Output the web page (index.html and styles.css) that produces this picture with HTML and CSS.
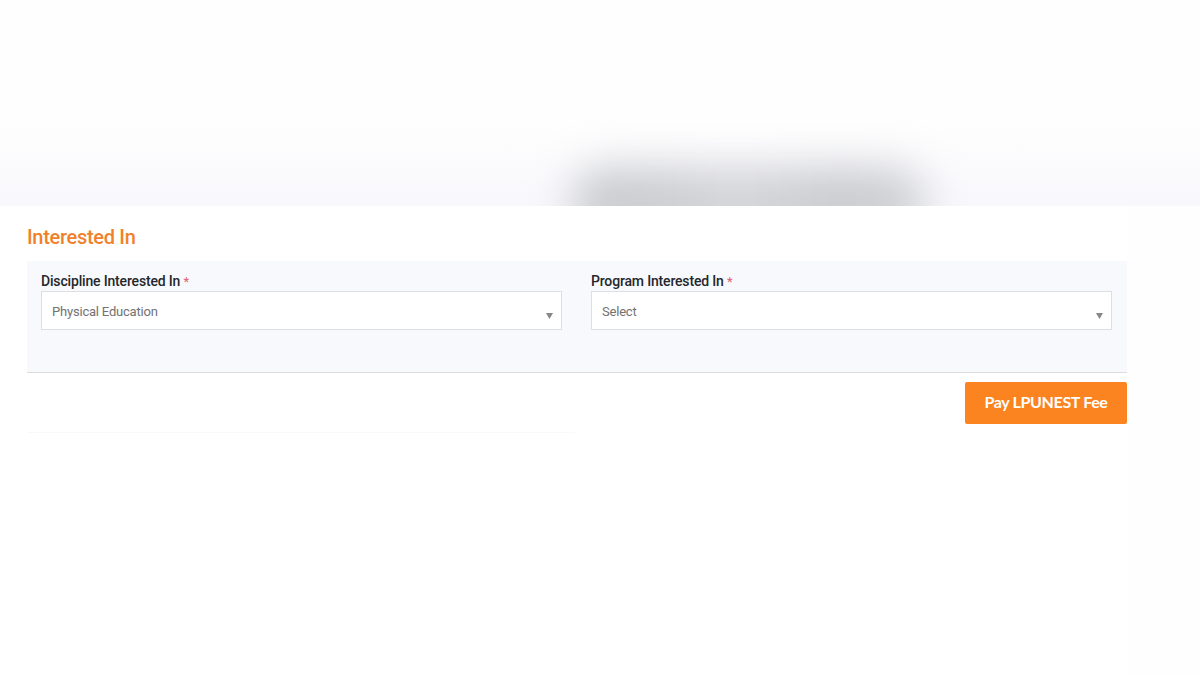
FILE: index.html
```html
<!DOCTYPE html>
<html lang="en">
<head>
<meta charset="utf-8">
<title>Interested In</title>
<link rel="stylesheet" href="styles.css">
</head>
<body>
<header class="hero">
  <div class="blob"></div>
</header>
<main class="content">
  <h2 class="title">Interested In</h2>
  <section class="panel">
    <div class="field">
      <label class="label">Discipline Interested In <span class="req">*</span></label>
      <div class="select">
        <span>Physical Education</span>
        <svg class="caret" width="7" height="6" viewBox="0 0 7 6"><path d="M0 0h7L3.5 6z"/></svg>
      </div>
    </div>
    <div class="field">
      <label class="label">Program Interested In <span class="req">*</span></label>
      <div class="select">
        <span>Select</span>
        <svg class="caret" width="7" height="6" viewBox="0 0 7 6"><path d="M0 0h7L3.5 6z"/></svg>
      </div>
    </div>
  </section>
  <div class="actions">
    <button class="pay" type="button">Pay LPUNEST Fee</button>
  </div>
  <div class="faint"></div>
</main>
</body>
</html>
```
FILE: styles.css
```css
* { box-sizing: border-box; }
html, body { margin: 0; padding: 0; }
body {
  width: 1200px;
  height: 675px;
  overflow: hidden;
  background: #fefefe;
  font-family: Roboto, "Liberation Sans", sans-serif;
}
.hero {
  position: relative;
  height: 206px;
  overflow: hidden;
  background: linear-gradient(to bottom, #fefefe 0, #fefefe 120px, #f8f8fc 206px);
}
.blob {
  position: absolute;
  left: 572px;
  top: 168px;
  width: 354px;
  height: 70px;
  border-radius: 35px;
  background: linear-gradient(to right, #c8c9cd 0, #cdced2 30%, #d4d5d9 45%, #cacbcf 75%, #d0d1d5 100%);
  filter: blur(20px);
}
.content {
  width: 1127px;
  padding-left: 27px;
  background: #fff;
  height: 469px;
}
.title {
  margin: 0;
  padding-top: 19px;
  height: 55px;
  font-size: 20px;
  line-height: 24px;
  font-weight: 500;
  letter-spacing: -0.3px;
  color: #f0812a;
}
.panel {
  display: flex;
  gap: 29px;
  height: 112px;
  padding: 12px 14px 0;
  background: #f8f9fd;
  border-bottom: 1px solid #dcdcdc;
}
.field { width: 521px; }
.label {
  display: block;
  height: 18px;
  font-size: 14px;
  line-height: 16px;
  font-weight: 500;
  letter-spacing: -0.17px;
  color: #24272b;
}
.req { color: #e0606f; font-size: 13px; font-weight: 400; }
.select {
  display: flex;
  align-items: center;
  justify-content: space-between;
  height: 39px;
  padding: 1px 8px 0 10px;
  background: #fff;
  border: 1px solid #dddfe5;
  font-size: 13px;
  letter-spacing: -0.2px;
  color: #727272;
}
.caret { fill: #85878a; margin-top: 9px; }
.actions {
  display: flex;
  justify-content: flex-end;
  padding-top: 9px;
}
.pay {
  width: 162px;
  height: 42px;
  border: 0;
  border-radius: 2px;
  background: #fb8420;
  color: #fff;
  font-family: Lato, "Liberation Sans", sans-serif;
  font-size: 16px;
  font-weight: 700;
  letter-spacing: -0.35px;
  padding: 0 0 3px;
}
.faint {
  width: 548px;
  height: 1px;
  margin-top: 8px;
  background: #f9f9f9;
}
```
